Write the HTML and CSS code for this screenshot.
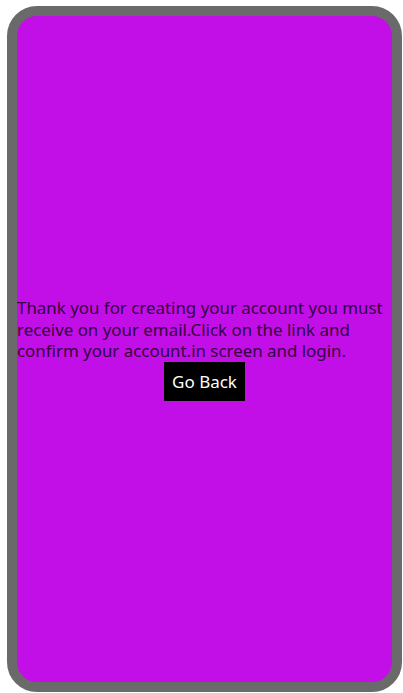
FILE: index.html
```html
<!DOCTYPE HTML>
<html>
<head>
<meta charset="utf-8">
<title>Confirm account</title>
<link rel="stylesheet" href="styles.css">
</head>
<body>
<div id="phone">
	<div class="screen">
		<p class="msg">Thank you for creating your account you must receive on your email.Click on the link and confirm your account.in screen and login.</p>
		<a href="javascript:;" class="btnBack">Go Back</a>
	</div>
</div>
</body>
</html>
```

FILE: styles.css
```css
/* reset start */
html,body{ height:100%;}
body,p{ margin:0; padding:0;}
body{ font-family:"Noto Sans","Open Sans",sans-serif; background:#fff; padding:6px 1px 1px 7px; box-sizing:border-box;}
a{ text-decoration:none;}
/* reset end */

/* frame start */
#phone{ height:100%; border:10px solid #6a6a6a; border-radius:30px; background:#c30fe7; box-sizing:border-box; overflow:hidden;}
.screen{ height:100%; display:flex; flex-direction:column; justify-content:center; align-items:center;}
.msg{ align-self:stretch; font-size:16.9px; line-height:21.5px; color:#33003f;}
.btnBack{ display:block; background:#000; color:#fff; font-size:17px; line-height:23px; padding:8px 8px;}
/* frame end */
```
